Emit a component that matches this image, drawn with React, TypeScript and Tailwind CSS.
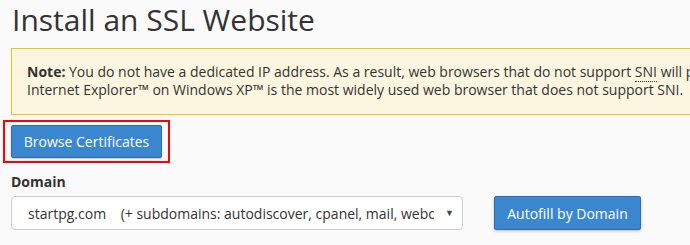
export default function App() {
  return (
    <div className="w-[690px] h-[245px] overflow-hidden bg-[#fafafa] text-[#333] font-['Open_Sans',sans-serif]">
      <h1 className="pl-[12px] pt-[1px] text-[30px] leading-[37px] text-[#333] whitespace-nowrap">Install an SSL Website</h1>
      <div className="ml-[11px] mt-[10px] w-[720px] h-[67px] border border-[#f1c40f] bg-[#fcf6e1] pl-[15px] pt-[14px] text-[14px] leading-[18px] whitespace-nowrap">
        <p>
          <b>Note:</b> You do not have a dedicated IP address. As a result, web browsers that do not support{" "}
          <abbr className="no-underline border-b border-dotted border-[#333]">SNI</abbr> will present a warning.
        </p>
        <p>Internet Explorer™ on Windows XP™ is the most widely used web browser that does not support SNI.</p>
      </div>
      <div className="ml-[3px] mt-[5px] inline-block border-2 border-[#ff0000] px-[6px] pt-[3px] pb-[3px]">
        <button className="h-[33px] w-[151px] rounded-[2px] border border-[#2d6fae] bg-[#3a87cf] text-[14px] text-white shadow-[0_1px_2px_rgba(0,0,0,0.2)]">
          Browse Certificates
        </button>
      </div>
      <div className="pl-[11px] mt-[9px] text-[14px] font-bold leading-[20px]">Domain</div>
      <div className="pl-[11px] mt-[4px] flex items-center gap-[31px]">
        <div className="flex h-[34px] w-[452px] items-center rounded-[4px] border border-[#ccc] bg-white pl-[16px] pr-[8px] text-[14px] whitespace-nowrap">
          <span className="w-[406px] overflow-hidden">startpg.com&nbsp;&nbsp;&nbsp;&nbsp;(+ subdomains: autodiscover, cpanel, mail, webdisk, webmail, www)</span>
          <span className="ml-auto text-[9px] text-[#444]">▼</span>
        </div>
        <button className="h-[34px] w-[147px] rounded-[2px] border border-[#2d6fae] bg-[#3a87cf] text-[14px] text-white shadow-[0_1px_3px_rgba(0,0,0,0.25)]">
          Autofill by Domain
        </button>
      </div>
    </div>
  );
}
